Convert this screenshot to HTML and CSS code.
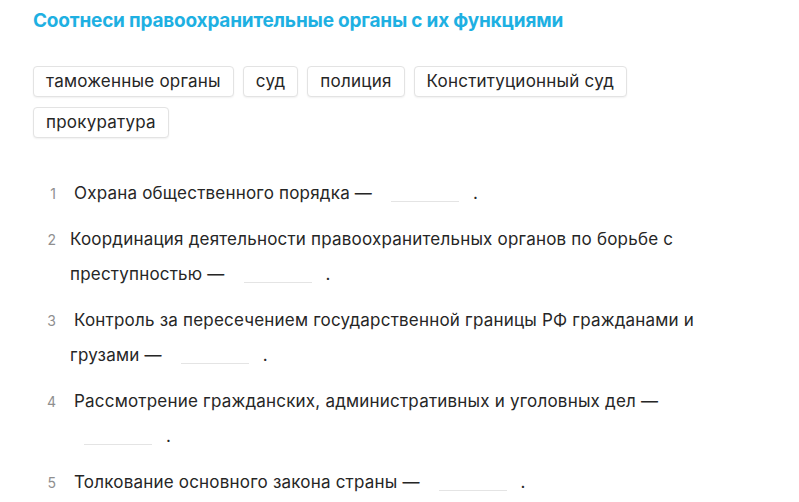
FILE: index.html
```html
<!DOCTYPE html>
<html lang="ru">
<head>
<meta charset="utf-8">
<link rel="stylesheet" href="styles.css">
</head>
<body>
<div class="task">
  <h1 class="title">Соотнеси правоохранительные органы с их функциями</h1>
  <div class="chips">
    <span class="chip">таможенные органы</span>
    <span class="chip">суд</span>
    <span class="chip">полиция</span>
    <span class="chip">Конституционный суд</span>
    <span class="chip">прокуратура</span>
  </div>
  <ol class="items">
    <li class="item"><span class="num">1</span><span class="text"><span class="lead">Охрана общественного порядка — <span class="blank"></span>.</span></span></li>
    <li class="item"><span class="num">2</span><span class="text">Координация деятельности правоохранительных органов по борьбе с преступностью — <span class="blank"></span>.</span></li>
    <li class="item"><span class="num">3</span><span class="text"><span class="lead">Контроль за пересечением государственной границы РФ гражданами и</span> грузами — <span class="blank"></span>.</span></li>
    <li class="item"><span class="num">4</span><span class="text"><span class="lead">Рассмотрение гражданских, административных и уголовных дел —</span> <span class="blank"></span>.</span></li>
    <li class="item"><span class="num">5</span><span class="text"><span class="lead">Толкование основного закона страны — <span class="blank"></span>.</span></span></li>
  </ol>
</div>
</body>
</html>
```

FILE: styles.css
```css
html, body {
  margin: 0;
  padding: 0;
  background: #ffffff;
}
body {
  font-family: Inter, "Noto Sans", sans-serif;
  color: #262626;
}
.task {
  padding: 8px 33px 0 33px;
}
.title {
  margin: 0;
  font-size: 19px;
  line-height: 26px;
  font-weight: 700;
  color: #1eb0e2;
  letter-spacing: -0.2px;
}
.chips {
  display: flex;
  flex-wrap: wrap;
  gap: 10px 9px;
  margin-top: 32px;
  width: 620px;
}
.chip {
  display: inline-block;
  padding: 5px 12px;
  font-size: 17px;
  line-height: 19px;
  letter-spacing: 0.22px;
  border: 1px solid #e3e3e3;
  border-radius: 4px;
  box-shadow: 0 1px 2px rgba(0,0,0,0.06);
  color: #262626;
  background: #fff;
}
.items {
  list-style: none;
  margin: 38px 0 0 0;
  padding: 0;
}
.item {
  display: flex;
  margin-bottom: 11px;
  font-size: 17px;
  line-height: 35px;
  letter-spacing: 0.2px;
}
.num {
  flex: 0 0 23px;
  text-align: right;
  margin-right: 14px;
  color: #8f8f8f;
  font-size: 14px;
  letter-spacing: 0;
}
.text {
  flex: 1;
  max-width: 660px;
}
.lead {
  padding-left: 4px;
}
.blank {
  display: inline-block;
  width: 68px;
  height: 1px;
  margin: 0 14px;
  border-bottom: 1px solid #e4e4e4;
  vertical-align: -3px;
}
```
